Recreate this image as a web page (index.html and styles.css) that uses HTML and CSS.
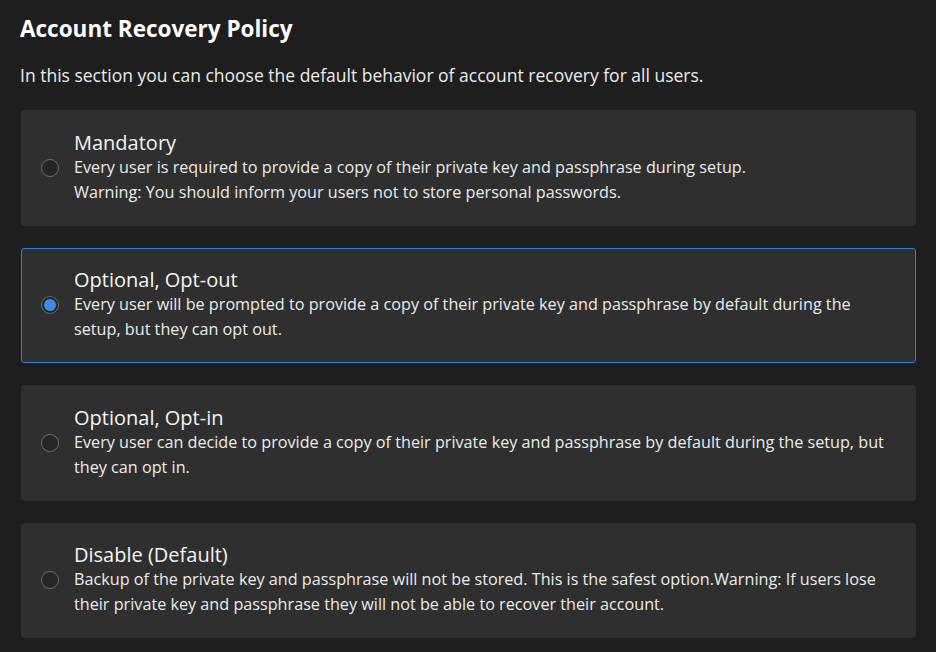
FILE: index.html
```html
<!DOCTYPE html>
<html lang="en">
<head>
<meta charset="utf-8">
<title>Account Recovery Policy</title>
<link rel="stylesheet" href="styles.css">
</head>
<body>
<main class="page">
  <h1 class="title">Account Recovery Policy</h1>
  <p class="intro">In this section you can choose the default behavior of account recovery for all users.</p>
  <div class="options">
    <label class="option">
      <span class="radio"></span>
      <span class="content">
        <span class="name">Mandatory</span>
        <span class="desc">Every user is required to provide a copy of their private key and passphrase during setup.</span>
        <span class="desc">Warning: You should inform your users not to store personal passwords.</span>
      </span>
    </label>
    <label class="option checked">
      <span class="radio"></span>
      <span class="content">
        <span class="name">Optional, Opt-out</span>
        <span class="desc">Every user will be prompted to provide a copy of their private key and passphrase by default during the setup, but they can opt out.</span>
      </span>
    </label>
    <label class="option">
      <span class="radio"></span>
      <span class="content">
        <span class="name">Optional, Opt-in</span>
        <span class="desc">Every user can decide to provide a copy of their private key and passphrase by default during the setup, but they can opt in.</span>
      </span>
    </label>
    <label class="option">
      <span class="radio"></span>
      <span class="content">
        <span class="name">Disable (Default)</span>
        <span class="desc">Backup of the private key and passphrase will not be stored. This is the safest option.Warning: If users lose their private key and passphrase they will not be able to recover their account.</span>
      </span>
    </label>
  </div>
</main>
</body>
</html>
```
FILE: styles.css
```css
html, body {
  margin: 0;
  padding: 0;
  background: #1e1e1e;
}
body {
  font-family: "Open Sans", "Liberation Sans", sans-serif;
  color: #f2f2f2;
}
.page {
  padding: 13px 20px 0 20px;
}
.title {
  margin: 0;
  font-size: 22.5px;
  font-weight: 700;
  line-height: 32px;
  color: #ffffff;
}
.intro {
  margin: 18px 0 0 0;
  font-size: 17.5px;
  line-height: 24px;
  color: #ececec;
}
.options {
  display: flex;
  flex-direction: column;
  gap: 22px;
  margin-top: 23px;
}
.option {
  display: flex;
  align-items: center;
  gap: 15px;
  height: 115.5px;
  box-sizing: border-box;
  margin-left: 1px;
  padding: 0 20px 0 19px;
  background: #2f2f2f;
  border: 1px solid #2f2f2f;
  border-radius: 3px;
}
.option.checked {
  border-color: #2f7fe0;
}
.radio {
  flex: none;
  width: 18px;
  height: 18px;
  box-sizing: border-box;
  border-radius: 50%;
  border: 1px solid #6a6a6a;
  background: #262626;
  display: flex;
  align-items: center;
  justify-content: center;
}
.checked .radio::after {
  content: "";
  width: 12px;
  height: 12px;
  border-radius: 50%;
  background: #3f8ce8;
}
.content {
  display: flex;
  flex-direction: column;
}
.name {
  font-size: 20px;
  line-height: 24px;
  color: #f5f5f5;
}
.desc {
  font-size: 16.2px;
  line-height: 25px;
  color: #ececec;
}
```
